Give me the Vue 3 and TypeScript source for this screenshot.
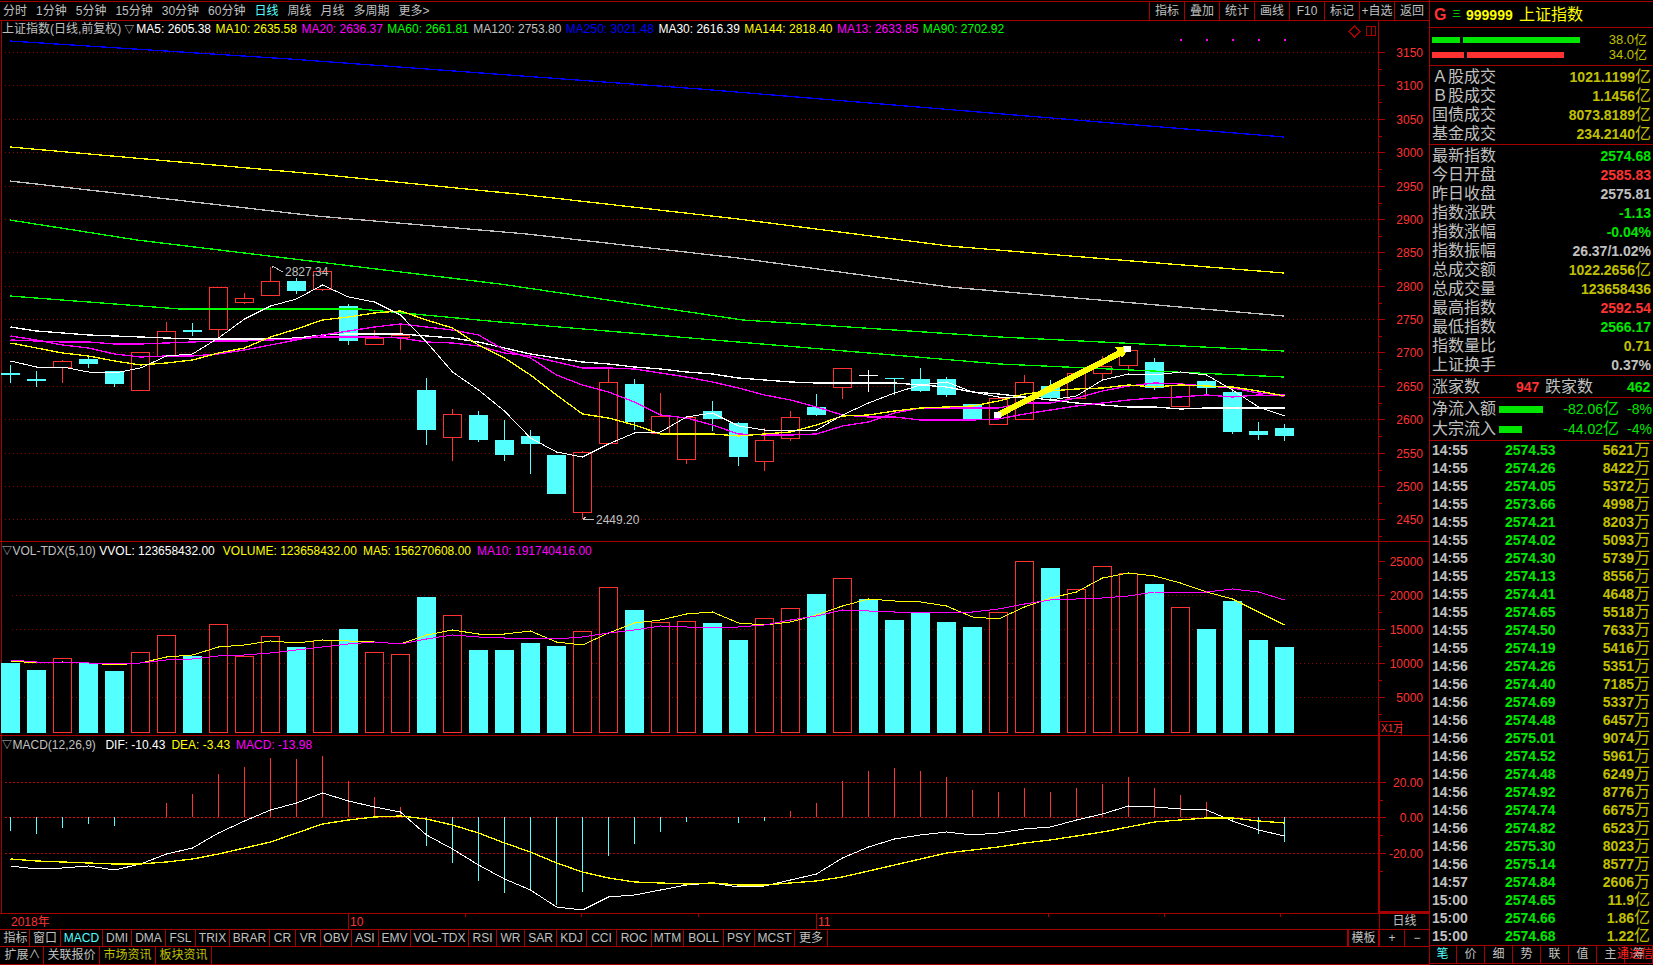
<template>
  <div class="app">
    <div class="left">
      <div class="topbar">
        <div class="tabs">
          <span v-for="t in periods" :key="t" :class="{ on: t === '日线' }">{{ t }}</span>
        </div>
        <div class="tools">
          <span v-for="t in topTools" :key="t">{{ t }}</span>
        </div>
      </div>

      <div class="pane">
        <svg class="chart" width="1429" height="520" viewBox="0 21 1429 520">
          <line x1="1.5" y1="21" x2="1.5" y2="541" class="frame" />
          <line v-for="p in priceTicks" :key="p.v" x1="5" :y1="p.y" x2="1378" :y2="p.y" class="grid" />

          <g v-for="(c, i) in candles" :key="i">
            <line :x1="X(i)" :y1="c[1]" :x2="X(i)" :y2="c[4]" :stroke="candleColor[c[0]]" />
            <rect v-if="c[0] === 'r'" :x="X(i) - 9" :y="c[2] + 0.5" width="18" :height="c[3] - c[2]" class="hollow" />
            <rect v-else :x="X(i) - 9.5" :y="c[2]" width="19" :height="Math.max(c[3] - c[2], 1)" :fill="candleColor[c[0]]" />
          </g>

          <polyline
            v-for="l in maLines"
            :key="l.color + l.pts"
            :points="l.pts"
            :stroke="l.color"
            :class="l.thin ? 'ln' : 'ln thick'"
          />

          <polyline points="998,415 1124,351" class="arrow" />
          <polygon points="1131,346 1115,347 1122,358" fill="#ffff00" />
          <rect x="994" y="412" width="7" height="6" fill="#fff" />
          <rect x="1124" y="346" width="7" height="6" fill="#fff" />

          <rect v-for="i in [45, 46, 47, 48, 49]" :key="i" :x="X(i) - 1" y="39" width="2" height="2" fill="#ff00ff" />
          <polygon points="1354.5,26 1360,31.5 1354.5,37 1349,31.5" class="mark" />
          <rect x="1366.5" y="26.5" width="9" height="9" class="mark" />
          <line x1="1371.5" y1="26.5" x2="1371.5" y2="35.5" class="frame" />

          <polyline points="272,268 272,266 283,272" class="note" />
          <text x="285" y="276" class="t-note">2827.34</text>
          <polyline points="586,517 583,519 594,520" class="note" />
          <text x="596" y="524" class="t-note">2449.20</text>

          <line x1="1378.5" y1="21" x2="1378.5" y2="541" class="frame" />
          <g v-for="p in priceTicks" :key="p.v">
            <line x1="1379" :y1="p.y" x2="1385" :y2="p.y" class="frame" />
            <line x1="1379" :y1="p.y + 17" x2="1382" :y2="p.y + 17" class="frame" />
            <text x="1423" :y="p.y + 4.5" text-anchor="end" class="t-axis">{{ p.v }}</text>
          </g>
        </svg>
        <div class="legend">
          <span class="gray">上证指数(日线,前复权)</span>
          <span class="gray tri">▽</span>
          <span v-for="m in maLegend" :key="m[0]" :style="{ color: m[2] }">{{ m[0] }}: {{ m[1] }}</span>
        </div>
      </div>

      <div class="pane">
        <svg class="chart" width="1429" height="193" viewBox="0 542 1429 193">
          <line x1="1.5" y1="542" x2="1.5" y2="735" class="frame" />
          <line v-for="y in [595.5, 629.5, 663.5, 697.5]" :key="y" x1="12" :y1="y" x2="1378" :y2="y" class="grid" />

          <g v-for="(t, i) in volTops" :key="i">
            <rect v-if="volKinds[i] === 'r'" :x="X(i) - 9" :y="t + 0.5" width="18" :height="732 - t" class="hollow" />
            <rect v-else :x="X(i) - 9.5" :y="t" width="19" :height="733 - t" fill="#54ffff" />
          </g>

          <polyline :points="vPts(volA)" stroke="#ffff00" class="ln" />
          <polyline :points="vPts(volB)" stroke="#ff00ff" class="ln" />

          <line x1="1378.5" y1="542" x2="1378.5" y2="735" class="frame" />
          <g v-for="p in volTicks" :key="p.v">
            <line x1="1379" :y1="p.y" x2="1385" :y2="p.y" class="frame" />
            <line x1="1379" :y1="p.y + 17" x2="1382" :y2="p.y + 17" class="frame" />
            <text x="1423" :y="p.y + 4.5" text-anchor="end" class="t-axis">{{ p.v }}</text>
          </g>
          <rect x="1379.5" y="721.5" width="22" height="14" class="frame-box" />
          <text x="1381" y="732" class="t-small">X1万</text>
        </svg>
        <div class="legend sub">
          <span class="gray tri">▽</span>
          <span class="gray lead-vol">VOL-TDX(5,10)</span>
          <span class="white">VVOL: 123658432.00</span>
          <span class="yellow gap">VOLUME: 123658432.00</span>
          <span class="yellow">MA5: 156270608.00</span>
          <span class="magenta">MA10: 191740416.00</span>
        </div>
      </div>

      <div class="pane">
        <svg class="chart" width="1429" height="177" viewBox="0 736 1429 177">
          <line x1="1.5" y1="736" x2="1.5" y2="913" class="frame" />
          <line v-for="y in [782.5, 853.5]" :key="y" x1="5" :y1="y" x2="1378" :y2="y" class="grid strong" />
          <line x1="5" y1="817.5" x2="1378" y2="817.5" class="grid zero" />

          <line
            v-for="(v, i) in macdBars"
            :key="i"
            :x1="X(i)"
            y1="817"
            :x2="X(i)"
            :y2="735 + v / 3"
            :stroke="v < 247 ? '#ff3232' : '#54ffff'"
          />

          <polyline :points="vPts(dif, 735)" stroke="#ffffff" class="ln" />
          <polyline :points="vPts(dea, 735)" stroke="#ffff00" class="ln thick" />

          <line x1="1379" y1="736" x2="1379" y2="913" class="frame thick" />
          <line x1="1378" y1="912" x2="1429" y2="912" class="frame thick" />
          <g v-for="p in macdTicks" :key="p.v">
            <line x1="1380" :y1="p.y" x2="1386" :y2="p.y" class="frame" />
            <line x1="1380" :y1="p.y + 18" x2="1383" :y2="p.y + 18" class="frame" />
            <text x="1423" :y="p.y + 4.5" text-anchor="end" class="t-axis">{{ p.v }}</text>
          </g>
        </svg>
        <div class="legend sub">
          <span class="gray tri">▽</span>
          <span class="gray lead-macd">MACD(12,26,9)</span>
          <span class="white">DIF: -10.43</span>
          <span class="yellow">DEA: -3.43</span>
          <span class="magenta">MACD: -13.98</span>
        </div>
      </div>

      <div class="timerow">
        <svg width="1379" height="15" viewBox="0 914 1379 15">
          <text x="11" y="926" class="t-axis">2018年</text>
          <line x1="348.5" y1="914" x2="348.5" y2="929" class="frame" />
          <text x="350" y="926" class="t-axis">10</text>
          <line x1="816.5" y1="914" x2="816.5" y2="929" class="frame" />
          <text x="818" y="926" class="t-axis">11</text>
          <line v-for="x in [465, 581, 698, 1048, 1164, 1280]" :key="x" :x1="x + 0.5" y1="914" :x2="x + 0.5" y2="917" class="frame" />
        </svg>
        <span class="period">日线</span>
      </div>

      <div class="toolrow">
        <span
          v-for="c in indicators"
          :key="c[0]"
          class="cell"
          :class="{ on: c[0] === 'MACD' }"
          :style="{ width: c[1] + 'px' }"
        >{{ c[0] }}</span>
        <span class="side">
          <span class="cell tpl">模板</span>
          <span class="cell pm">+</span>
          <span class="cell pm">−</span>
        </span>
      </div>

      <div class="bottomrow">
        <span class="cell w-a">扩展∧</span>
        <span class="cell w-b">关联报价</span>
        <span class="cell w-b dim">市场资讯</span>
        <span class="cell w-b dim">板块资讯</span>
      </div>
    </div>

    <div class="panel">
      <div class="p-head">
        <span class="g">G</span>
        <span class="san">三</span>
        <span class="code">999999</span>
        <span class="name">上证指数</span>
      </div>

      <div class="p-buys">
        <div class="buy">
          <i class="bar green w28"></i><i class="bar green w117"></i>
          <span class="buy-val">38.0亿</span>
        </div>
        <div class="buy">
          <i class="bar red w32"></i><i class="bar red w97"></i>
          <span class="buy-val">34.0亿</span>
        </div>
      </div>

      <div class="p-rows four">
        <div v-for="r in turnover" :key="r[0]" class="row">
          <span>{{ r[0] }}</span>
          <b class="olive">{{ r[1] }}<em>亿</em></b>
        </div>
      </div>

      <div class="p-rows twelve">
        <div v-for="r in quotes" :key="r[0]" class="row">
          <span>{{ r[0] }}</span>
          <b :class="r[2]">{{ r[1] }}<em v-if="r[3]">{{ r[3] }}</em></b>
        </div>
      </div>

      <div class="p-breadth">
        <span class="b1">涨家数</span>
        <b class="red-t">947</b>
        <span class="b2">跌家数</span>
        <b class="green-t">462</b>
      </div>

      <div class="p-flow">
        <div class="flow">
          <span class="f-l">净流入额</span>
          <i class="f-bar w44"></i>
          <span class="f-v">-82.06<em>亿</em></span>
          <span class="f-p">-8%</span>
        </div>
        <div class="flow">
          <span class="f-l">大宗流入</span>
          <i class="f-bar w23"></i>
          <span class="f-v">-44.02<em>亿</em></span>
          <span class="f-p">-4%</span>
        </div>
      </div>

      <div class="p-list">
        <div v-for="(t, i) in trades" :key="i" class="trade">
          <b class="t-time">{{ t[0] }}</b>
          <b class="t-price">{{ t[1] }}</b>
          <b class="t-vol">{{ t[2].slice(0, -1) }}<em>{{ t[2].slice(-1) }}</em></b>
        </div>
      </div>

      <div class="p-tabs">
        <span v-for="t in sideTabs" :key="t" :class="{ on: t === '笔' }">{{ t }}</span>
        <span class="brand">通达信</span>
      </div>
    </div>
  </div>
</template>

<script setup lang="ts">
type Candle = [string, number, number, number, number]

const periods = ['分时', '1分钟', '5分钟', '15分钟', '30分钟', '60分钟', '日线', '周线', '月线', '多周期', '更多>']
const topTools = ['指标', '叠加', '统计', '画线', 'F10', '标记', '+自选', '返回']
const sideTabs = ['笔', '价', '细', '势', '联', '值', '主', '筹']

const X = (i: number) => 10.5 + 26 * i

const priceY = (p: number) => Math.round(519.3 - (p - 2450) * 0.6675) + 0.5
const priceTicks: { v: number; y: number }[] = []
for (let p = 3150; p >= 2450; p -= 50) priceTicks.push({ v: p, y: priceY(p) })

const volTicks = [25000, 20000, 15000, 10000, 5000].map((v, i) => ({ v, y: 561.5 + i * 34 }))
const macdTicks = [
  { v: '20.00', y: 782.5 },
  { v: '0.00', y: 817.5 },
  { v: '-20.00', y: 853.5 }
]

const candleColor: Record<string, string> = { r: '#ff3232', c: '#54ffff', w: '#ffffff' }

// kind, high, body top, body bottom, low (page pixels)
const candles: Candle[] = [
  ['c', 365, 373, 375, 383], ['c', 371, 379, 381, 387], ['r', 360, 361, 367, 383], ['c', 355, 359, 364, 368],
  ['c', 371, 371, 384, 387], ['r', 352, 352, 390, 390], ['r', 322, 331, 356, 356], ['c', 323, 330, 332, 336],
  ['r', 287, 287, 329, 337], ['r', 293, 298, 302, 304], ['r', 267, 281, 295, 295], ['c', 278, 281, 291, 294],
  ['r', 271, 271, 289, 291], ['c', 304, 306, 341, 345], ['r', 330, 338, 344, 344], ['r', 323, 335, 337, 350],
  ['c', 378, 390, 430, 445], ['r', 409, 414, 437, 461], ['c', 411, 415, 440, 442], ['c', 420, 440, 455, 461],
  ['c', 430, 436, 444, 474], ['c', 455, 455, 494, 494], ['r', 451, 452, 512, 519], ['r', 369, 382, 443, 443],
  ['c', 379, 384, 422, 430], ['r', 393, 416, 433, 433], ['r', 417, 417, 459, 464], ['c', 401, 411, 419, 431],
  ['c', 422, 423, 457, 466], ['r', 428, 440, 461, 471], ['r', 411, 417, 438, 441], ['c', 394, 407, 415, 416],
  ['r', 368, 368, 387, 399], ['w', 370, 375, 376, 392], ['c', 378, 378, 379, 395], ['c', 368, 379, 391, 392],
  ['c', 377, 379, 395, 397], ['c', 404, 404, 419, 420], ['r', 398, 398, 424, 425], ['r', 375, 382, 419, 419],
  ['c', 380, 386, 398, 401], ['r', 373, 373, 398, 398], ['r', 356, 366, 373, 381], ['r', 350, 350, 365, 369],
  ['c', 358, 362, 388, 390], ['r', 385, 385, 406, 407], ['c', 380, 381, 388, 395], ['c', 389, 392, 432, 434],
  ['c', 422, 431, 435, 440], ['c', 424, 428, 436, 441]
]

const ma5 = [
  361, 367, 367, 372, 373, 368, 356, 354, 338, 319, 306, 299, 285, 297, 302, 315, 342, 372, 390, 411,
  438, 452, 457, 444, 433, 432, 417, 413, 426, 430, 430, 430, 415, 403, 393, 385, 382, 392, 397, 397,
  400, 396, 380, 374, 375, 372, 375, 390, 407, 416
]
const ma10 = [
  343, 348, 353, 356, 361, 365, 363, 360, 353, 348, 337, 329, 320, 317, 313, 311, 320, 328, 345, 358,
  375, 395, 414, 418, 425, 434, 434, 434, 436, 434, 432, 425, 416, 415, 411, 408, 407, 406, 401, 394,
  391, 389, 388, 385, 387, 385, 386, 387, 391, 396
]
const ma13 = [
  336, 340, 345, 348, 354, 357, 356, 356, 354, 350, 345, 340, 335, 331, 327, 324, 327, 330, 335, 350,
  358, 375, 385, 392, 402, 415, 418, 425, 434, 435, 435, 434, 426, 422, 413, 408, 408, 408, 408, 403,
  403, 398, 391, 386, 383, 384, 386, 388, 393, 395
]
const ma20 = [
  340, 341, 342, 342, 344, 344, 343, 342, 341, 341, 340, 339, 337, 337, 337, 338, 342, 343, 346, 353,
  356, 362, 368, 368, 369, 373, 377, 382, 388, 395, 400, 407, 415, 417, 417, 420, 420, 420, 419, 414,
  410, 406, 403, 400, 398, 397, 395, 397, 395, 396
]
const ma30 = [
  327, 331, 333, 335, 336, 337, 338, 339, 339, 339, 339, 338, 335, 334, 334, 334, 336, 338, 342, 348,
  354, 358, 362, 364, 367, 369, 372, 374, 378, 380, 382, 383, 383, 383, 383, 385, 387, 392, 394, 397,
  400, 403, 405, 407, 407, 409, 408, 408, 408, 408
]

const yPts = (ys: number[]) => ys.map((y, i) => `${X(i)},${y}`).join(' ')
const vPts = (vs: number[], base = 530) => vs.map((v, i) => `${X(i)},${Math.round(base + v / 3)}`).join(' ')

const maLines = [
  { color: '#0000ff', pts: '10,41 290,59 700,89 1100,122 1284,137' },
  { color: '#ffff00', pts: '10,147 316,174 527,195 738,219 949,246 1107,259 1284,273' },
  { color: '#c0c0c0', pts: '10,181 316,216 527,234 738,258 949,287 1284,316' },
  { color: '#00ff00', pts: '10,220 137,240 500,284 743,320 1000,337 1284,351' },
  { color: '#00ff00', pts: '10,296 180,309 360,309 500,322 1000,364 1284,377' },
  { color: '#ffffff', pts: yPts(ma30) },
  { color: '#ff00ff', pts: yPts(ma20) },
  { color: '#ff00ff', pts: yPts(ma13) },
  { color: '#ffff00', pts: yPts(ma10) },
  { color: '#ffffff', pts: yPts(ma5), thin: true }
]

const maLegend = [
  ['MA5', '2605.38', '#ffffff'],
  ['MA10', '2635.58', '#ffff00'],
  ['MA20', '2636.37', '#ff00ff'],
  ['MA60', '2661.81', '#00ff00'],
  ['MA120', '2753.80', '#c0c0c0'],
  ['MA250', '3021.48', '#0000ff'],
  ['MA30', '2616.39', '#ffffff'],
  ['MA144', '2818.40', '#ffff00'],
  ['MA13', '2633.85', '#ff00ff'],
  ['MA90', '2702.92', '#00ff00']
]

const volKinds = 'ccrcc' + 'rrcrr' + 'rcrcr' + 'rcrcc' + 'ccrrc' + 'rrccr' + 'rcrcc' + 'cccrr' + 'crrrc' + 'rcccc'
const volTops = [
  663, 670, 658, 663, 671, 652, 635, 656, 624, 656, 636, 647, 640, 629, 652, 654, 597, 615, 650, 650,
  643, 646, 631, 587, 610, 622, 621, 623, 640, 618, 608, 594, 578, 599, 620, 613, 622, 627, 612, 561,
  568, 589, 566, 573, 584, 607, 629, 601, 640, 647
]
const volA = [
  393, 400, 397, 400, 406, 400, 380, 376, 352, 344, 334, 338, 331, 334, 335, 343, 316, 299, 311, 311,
  304, 335, 344, 308, 280, 270, 252, 247, 280, 285, 275, 255, 228, 208, 212, 215, 228, 260, 268, 230,
  205, 185, 145, 128, 138, 160, 185, 207, 245, 284
]
const volB = [
  391, 395, 397, 398, 402, 398, 390, 388, 377, 376, 368, 360, 352, 342, 337, 341, 328, 316, 322, 323,
  324, 326, 322, 308, 300, 287, 292, 295, 292, 285, 270, 258, 241, 244, 247, 245, 245, 247, 238, 222,
  210, 208, 204, 197, 187, 185, 187, 178, 185, 211
]

const macdBars = [
  288, 297, 279, 268, 273, 245, 205, 177, 117, 96, 70, 72, 63, 138, 186, 216, 333, 384, 438, 474,
  468, 510, 470, 362, 327, 291, 262, 245, 264, 258, 228, 204, 138, 108, 99, 108, 126, 165, 171, 159,
  171, 159, 147, 126, 159, 180, 201, 258, 297, 320
]
const dif = [
  394, 403, 399, 394, 404, 388, 357, 338, 293, 258, 225, 205, 175, 198, 216, 230, 300, 342, 390, 433,
  466, 516, 526, 487, 480, 465, 450, 443, 457, 453, 435, 418, 370, 335, 312, 300, 292, 300, 295, 281,
  276, 255, 238, 214, 217, 221, 225, 258, 285, 303
]
const dea = [
  373, 378, 382, 385, 388, 387, 381, 372, 356, 338, 320, 295, 267, 255, 247, 244, 253, 270, 295, 325,
  350, 385, 412, 430, 440, 443, 446, 445, 449, 449, 443, 438, 427, 408, 389, 371, 355, 345, 335, 325,
  314, 303, 290, 275, 262, 255, 249, 250, 258, 265
]

const indicators: [string, number][] = [
  ['指标', 28], ['窗口', 31], ['MACD', 42], ['DMI', 29], ['DMA', 34], ['FSL', 30], ['TRIX', 34], ['BRAR', 40],
  ['CR', 26], ['VR', 25], ['OBV', 31], ['ASI', 27], ['EMV', 32], ['VOL-TDX', 58], ['RSI', 28], ['WR', 28],
  ['SAR', 32], ['KDJ', 30], ['CCI', 30], ['ROC', 35], ['MTM', 32], ['BOLL', 40], ['PSY', 31], ['MCST', 40],
  ['更多', 33]
]

const turnover = [
  ['Ａ股成交', '1021.1199'],
  ['Ｂ股成交', '1.1456'],
  ['国债成交', '8073.8189'],
  ['基金成交', '234.2140']
]

const quotes = [
  ['最新指数', '2574.68', 'green-t'],
  ['今日开盘', '2585.83', 'red-t'],
  ['昨日收盘', '2575.81', 'gray-t'],
  ['指数涨跌', '-1.13', 'green-t'],
  ['指数涨幅', '-0.04%', 'green-t'],
  ['指数振幅', '26.37/1.02%', 'gray-t'],
  ['总成交额', '1022.2656', 'olive', '亿'],
  ['总成交量', '123658436', 'olive'],
  ['最高指数', '2592.54', 'red-t'],
  ['最低指数', '2566.17', 'green-t'],
  ['指数量比', '0.71', 'olive'],
  ['上证换手', '0.37%', 'gray-t']
]

const trades = `14:55 2574.53 5621万
14:55 2574.26 8422万
14:55 2574.05 5372万
14:55 2573.66 4998万
14:55 2574.21 8203万
14:55 2574.02 5093万
14:55 2574.30 5739万
14:55 2574.13 8556万
14:55 2574.41 4648万
14:55 2574.65 5518万
14:55 2574.50 7633万
14:55 2574.19 5416万
14:56 2574.26 5351万
14:56 2574.40 7185万
14:56 2574.69 5337万
14:56 2574.48 6457万
14:56 2575.01 9074万
14:56 2574.52 5961万
14:56 2574.48 6249万
14:56 2574.92 8776万
14:56 2574.74 6675万
14:56 2574.82 6523万
14:56 2575.30 8023万
14:56 2575.14 8577万
14:57 2574.84 2606万
15:00 2574.65 11.9亿
15:00 2574.66 1.86亿
15:00 2574.68 1.22亿`
  .split('\n')
  .map((l) => l.split(' '))
</script>

<style scoped>
.app {
  display: flex;
  width: 1653px;
  height: 965px;
  overflow: hidden;
  background: #000;
  color: #c0c0c0;
  font: 12px/1 "Liberation Sans", "Noto Sans CJK SC", sans-serif;
}

.left {
  width: 1429px;
  flex: none;
  padding-top: 1px;
}

.topbar {
  display: flex;
  justify-content: space-between;
  height: 20px;
  box-sizing: border-box;
  border-top: 1px solid #a80000;
  border-bottom: 1px solid #a80000;
}

.tabs {
  display: flex;
  align-items: center;
  gap: 9px;
  padding-left: 3px;
}

.tabs .on {
  color: #54ffff;
}

.tools {
  display: flex;
}

.tools span {
  width: 35px;
  box-sizing: border-box;
  border-left: 1px solid #a80000;
  text-align: center;
  line-height: 18px;
}

.pane {
  position: relative;
  border-bottom: 1px solid #a80000;
}

.chart {
  display: block;
  shape-rendering: crispEdges;
}

.frame {
  stroke: #a80000;
  stroke-width: 1;
}

.frame.thick {
  stroke-width: 2;
}

.frame-box {
  fill: none;
  stroke: #a80000;
}

.mark {
  fill: none;
  stroke: #a80000;
}

.grid {
  stroke: #900000;
  stroke-width: 1;
  stroke-dasharray: 1 3;
}

.grid.strong {
  stroke: #c00000;
  stroke-dasharray: 2 2;
}

.grid.zero {
  stroke: #f00000;
  stroke-dasharray: 2 2;
}

.hollow {
  fill: #000;
  stroke: #ff3232;
  stroke-width: 1;
}

.ln {
  fill: none;
  stroke-width: 1;
}

.ln.thick {
  stroke-width: 1.3;
}

.arrow {
  fill: none;
  stroke: #ffff00;
  stroke-width: 6;
}

.note {
  fill: none;
  stroke: #c0c0c0;
}

.t-axis {
  fill: #ff3232;
  font-size: 12px;
}

.t-small {
  fill: #ff3232;
  font-size: 10px;
}

.t-note {
  fill: #c0c0c0;
  font-size: 12px;
}

.legend {
  position: absolute;
  top: 0;
  left: 2px;
  display: flex;
  gap: 4.5px;
  height: 16px;
  line-height: 17px;
  white-space: nowrap;
}

.legend.sub {
  top: 1px;
  gap: 6px;
  line-height: 16px;
}

.legend .tri {
  font-size: 10px;
  margin-left: -1.5px;
  margin-right: -2.5px;
}

.legend.sub .tri {
  margin-left: 0;
  margin-right: -5.5px;
}

.legend .lead-vol {
  margin-right: -2.5px;
}

.legend .lead-macd {
  margin-right: 3.5px;
}

.legend .gap {
  margin-left: 2px;
}

.gray {
  color: #c0c0c0;
}

.white {
  color: #fff;
}

.yellow {
  color: #ffff00;
}

.magenta {
  color: #ff00ff;
}

.timerow {
  display: flex;
  height: 16px;
  border-bottom: 1px solid #a80000;
  box-sizing: border-box;
}

.period {
  flex: 1;
  border-left: 1px solid #a80000;
  text-align: center;
  line-height: 15px;
}

.toolrow {
  display: flex;
  height: 17px;
  padding-left: 2px;
  box-sizing: border-box;
  border-bottom: 1px solid #a80000;
}

.cell {
  flex: none;
  box-sizing: border-box;
  border-right: 1px solid #a80000;
  text-align: center;
  line-height: 16px;
  white-space: nowrap;
}

.cell.on {
  color: #54ffff;
}

.side {
  display: flex;
  margin-left: auto;
}

.tpl {
  width: 32px;
  border-left: 2px solid #a80000;
}

.pm {
  width: 25px;
  border-right: none;
  border-left: 1px solid #a80000;
}

.bottomrow {
  display: flex;
  height: 18px;
  padding-left: 2px;
  box-sizing: border-box;
  border-bottom: 1px solid #a80000;
}

.w-a {
  width: 42px;
}

.w-b {
  width: 56px;
}

.dim {
  color: #c0c000;
}

.panel {
  position: relative;
  flex: 1;
  padding-top: 1px;
  box-sizing: border-box;
  border-left: 1px solid #a80000;
  border-right: 1px solid #a80000;
  font-size: 16px;
}

.p-head {
  display: grid;
  grid-template-columns: 18px 14px 53px auto;
  align-items: center;
  height: 27px;
  box-sizing: border-box;
  border-top: 1px solid #a80000;
  border-bottom: 1px solid #a80000;
  padding-left: 4px;
  font-size: 16px;
  color: #ffff00;
}

.p-head .g {
  color: #ff3232;
  font-weight: bold;
}

.p-head .san {
  color: #00e600;
  font-size: 9px;
}

.p-head .code {
  font-weight: bold;
  font-size: 14px;
}

.p-buys {
  height: 38px;
  box-sizing: border-box;
  padding-top: 4px;
  border-bottom: 1px solid #a80000;
}

.buy {
  display: flex;
  align-items: center;
  height: 15px;
  padding-left: 2px;
}

.bar {
  height: 6px;
  margin-right: 3px;
}

.bar.green {
  background: #00e600;
}

.bar.red {
  background: #ff3232;
}

.w28 {
  width: 28px;
}

.w117 {
  width: 117px;
}

.w32 {
  width: 32px;
}

.w97 {
  width: 97px;
}

.buy-val {
  margin-left: auto;
  padding-right: 6px;
  color: #c0c000;
  font-size: 13px;
}

.p-rows {
  display: grid;
  box-sizing: border-box;
  border-bottom: 1px solid #a80000;
}

.p-rows.four {
  height: 79px;
  padding-top: 1px;
  grid-template-rows: repeat(4, 1fr);
}

.p-rows.twelve {
  height: 231px;
  padding-top: 1px;
  grid-template-rows: repeat(12, 1fr);
}

.row {
  display: flex;
  align-items: center;
  justify-content: space-between;
  padding: 0 2px;
}

.row b {
  font-size: 14px;
}

.row em,
.t-vol em,
.f-v em {
  font-style: normal;
  font-weight: normal;
  font-size: 16px;
}

.olive {
  color: #c0c000;
}

.green-t {
  color: #00e600;
}

.red-t {
  color: #ff3232;
}

.gray-t {
  color: #c0c0c0;
}

.p-breadth {
  display: flex;
  align-items: center;
  height: 22px;
  box-sizing: border-box;
  padding: 0 2px;
  border-bottom: 1px solid #a80000;
}

.p-breadth b {
  font-size: 14px;
}

.p-breadth .b1 {
  width: 84px;
}

.p-breadth .b2 {
  margin-left: 6px;
  width: 82px;
}

.p-breadth b:first-of-type {
  width: 23px;
}

.p-flow {
  height: 43px;
  box-sizing: border-box;
  padding-top: 1px;
  border-bottom: 1px solid #a80000;
}

.flow {
  display: flex;
  align-items: center;
  height: 20px;
  padding-left: 2px;
  color: #00e600;
  font-size: 14px;
}

.f-l {
  width: 67px;
  color: #c0c0c0;
  font-size: 16px;
}

.f-bar {
  height: 7px;
  background: #00e600;
}

.w44 {
  width: 44px;
}

.w23 {
  width: 23px;
}

.f-v {
  margin-left: auto;
  margin-right: 8px;
}

.f-p {
  width: 25px;
  text-align: right;
  padding-right: 1px;
}

.p-list {
  height: 505px;
  box-sizing: border-box;
  display: grid;
  grid-template-rows: repeat(28, 1fr);
  border-bottom: 1px solid #a80000;
}

.trade {
  display: flex;
  align-items: center;
  padding: 0 3px 0 2px;
  font-size: 14px;
}

.t-time {
  width: 73px;
  color: #c0c0c0;
}

.t-price {
  color: #00e600;
}

.t-vol {
  margin-left: auto;
  color: #c0c000;
}

.p-tabs {
  position: relative;
  display: grid;
  grid-template-columns: repeat(8, 28px);
  margin-left: -1px;
  height: 18px;
  box-sizing: border-box;
  border-bottom: 1px solid #a80000;
  font-size: 12px;
}

.p-tabs > span {
  box-sizing: border-box;
  border-right: 1px solid #a80000;
  text-align: center;
  line-height: 17px;
}

.p-tabs .on {
  color: #54ffff;
}

.p-tabs .brand {
  position: absolute;
  right: 0;
  top: 0;
  border: none;
  color: #ff2020;
  white-space: nowrap;
}
</style>

<style>
html,
body {
  background: #000;
}
</style>
